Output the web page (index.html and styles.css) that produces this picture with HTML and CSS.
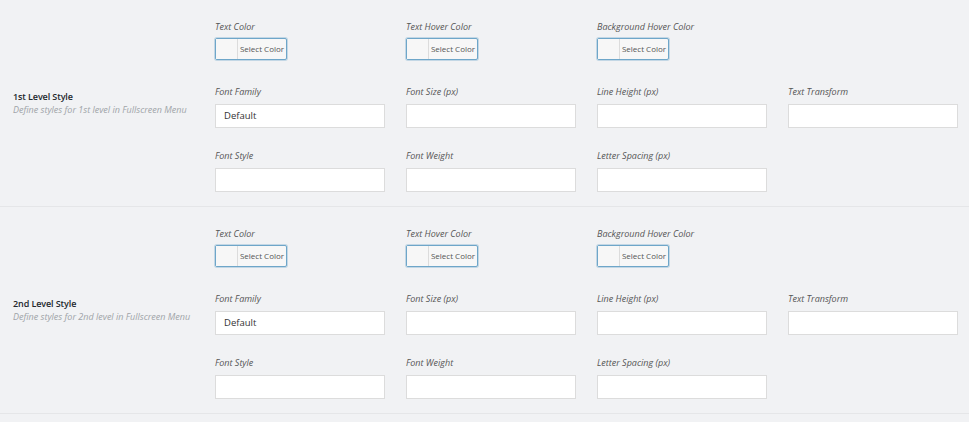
FILE: index.html
```html
<!DOCTYPE html>
<html>
<head>
<meta charset="utf-8">
<link rel="stylesheet" href="styles.css">
</head>
<body>
<div class="page">
  <section class="group">
    <div class="group-head">
      <div class="group-title">1st Level Style</div>
      <div class="group-desc">Define styles for 1st level in Fullscreen Menu</div>
    </div>
    <div class="fields">
      <div class="field"><div class="label">Text Color</div><button class="color-btn"><span class="swatch"></span><span class="color-text">Select Color</span></button></div>
      <div class="field"><div class="label">Text Hover Color</div><button class="color-btn"><span class="swatch"></span><span class="color-text">Select Color</span></button></div>
      <div class="field"><div class="label">Background Hover Color</div><button class="color-btn"><span class="swatch"></span><span class="color-text">Select Color</span></button></div>
      <div class="field empty"></div>

      <div class="field"><div class="label">Font Family</div><div class="input">Default</div></div>
      <div class="field"><div class="label">Font Size (px)</div><div class="input"></div></div>
      <div class="field"><div class="label">Line Height (px)</div><div class="input"></div></div>
      <div class="field"><div class="label">Text Transform</div><div class="input"></div></div>

      <div class="field"><div class="label">Font Style</div><div class="input"></div></div>
      <div class="field"><div class="label">Font Weight</div><div class="input"></div></div>
      <div class="field"><div class="label">Letter Spacing (px)</div><div class="input"></div></div>
      <div class="field empty"></div>
    </div>
  </section>
  <section class="group">
    <div class="group-head">
      <div class="group-title">2nd Level Style</div>
      <div class="group-desc">Define styles for 2nd level in Fullscreen Menu</div>
    </div>
    <div class="fields">
      <div class="field"><div class="label">Text Color</div><button class="color-btn"><span class="swatch"></span><span class="color-text">Select Color</span></button></div>
      <div class="field"><div class="label">Text Hover Color</div><button class="color-btn"><span class="swatch"></span><span class="color-text">Select Color</span></button></div>
      <div class="field"><div class="label">Background Hover Color</div><button class="color-btn"><span class="swatch"></span><span class="color-text">Select Color</span></button></div>
      <div class="field empty"></div>

      <div class="field"><div class="label">Font Family</div><div class="input">Default</div></div>
      <div class="field"><div class="label">Font Size (px)</div><div class="input"></div></div>
      <div class="field"><div class="label">Line Height (px)</div><div class="input"></div></div>
      <div class="field"><div class="label">Text Transform</div><div class="input"></div></div>

      <div class="field"><div class="label">Font Style</div><div class="input"></div></div>
      <div class="field"><div class="label">Font Weight</div><div class="input"></div></div>
      <div class="field"><div class="label">Letter Spacing (px)</div><div class="input"></div></div>
      <div class="field empty"></div>
    </div>
  </section>
</div>
</body>
</html>
```

FILE: styles.css
```css
html, body {
  margin: 0;
  padding: 0;
  background: #f1f2f4;
}
body {
  font-family: "Open Sans", "Noto Sans", sans-serif;
  color: #444;
}
.page {
  width: 969px;
}
.group {
  display: flex;
  align-items: center;
  padding: 20px 0 14px 0;
  border-bottom: 1px solid #e5e6e8;
}
.group-head {
  width: 202px;
  padding-left: 13px;
  margin-bottom: 7px;
}
.group-title {
  font-size: 9px;
  font-weight: 600;
  letter-spacing: -0.1px;
  color: #23282d;
  line-height: 13px;
}
.group-desc {
  font-size: 9px;
  font-style: italic;
  color: #a0a4a8;
  line-height: 13px;
}
.fields {
  display: grid;
  grid-template-columns: repeat(4, 170px);
  column-gap: 21px;
  row-gap: 21px;
}
.field {
  display: flex;
  flex-direction: column;
  align-items: flex-start;
}
.label {
  font-size: 9px;
  font-style: italic;
  color: #555;
  line-height: 14px;
  margin-bottom: 5px;
}
.input {
  box-sizing: border-box;
  width: 170px;
  height: 24px;
  background: #fff;
  border: 1px solid #dcdcdc;
  font-size: 9.5px;
  color: #333;
  line-height: 22px;
  padding-left: 8px;
}
.color-btn {
  box-sizing: border-box;
  display: flex;
  align-items: stretch;
  width: 72px;
  height: 22px;
  padding: 0;
  margin: -1px 0 4px 0;
  background: #f7f7f7;
  border: 1px solid #6ea6c9;
  border-radius: 2px;
  box-shadow: 0 0 0 1px rgba(110, 166, 201, 0.35);
  font-family: inherit;
  cursor: pointer;
}
.swatch {
  width: 21px;
  background: #f7f7f7;
  border-right: 1px solid #dcdcdc;
}
.color-text {
  flex: 1;
  font-size: 8px;
  line-height: 20px;
  color: #555;
  text-align: center;
}
```
